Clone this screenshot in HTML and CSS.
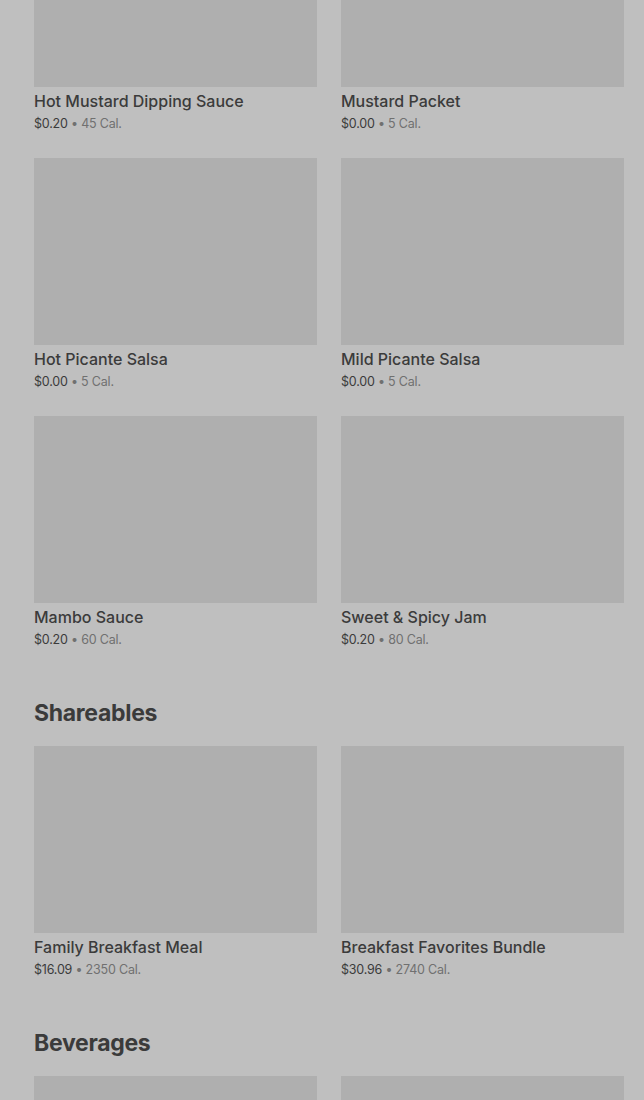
FILE: index.html
```html
<!DOCTYPE html>
<html lang="en">
<head>
    <meta charset="UTF-8">
    <meta name="viewport" content="width=device-width, initial-scale=1.0">
    <title>Menu</title>
    <link rel="stylesheet" href="styles.css">
</head>
<body>
    <div class="menu">
        <!-- Sauces (continued) -->
        <div class="items items-first">
            <div class="item">
                <div class="item-img"></div>
                <div class="item-name">Hot Mustard Dipping Sauce</div>
                <div class="item-meta"><span class="price">$0.20</span> • 45 Cal.</div>
            </div>
            <div class="item">
                <div class="item-img"></div>
                <div class="item-name">Mustard Packet</div>
                <div class="item-meta"><span class="price">$0.00</span> • 5 Cal.</div>
            </div>
            <div class="item">
                <div class="item-img"></div>
                <div class="item-name">Hot Picante Salsa</div>
                <div class="item-meta"><span class="price">$0.00</span> • 5 Cal.</div>
            </div>
            <div class="item">
                <div class="item-img"></div>
                <div class="item-name">Mild Picante Salsa</div>
                <div class="item-meta"><span class="price">$0.00</span> • 5 Cal.</div>
            </div>
            <div class="item">
                <div class="item-img"></div>
                <div class="item-name">Mambo Sauce</div>
                <div class="item-meta"><span class="price">$0.20</span> • 60 Cal.</div>
            </div>
            <div class="item">
                <div class="item-img"></div>
                <div class="item-name">Sweet &amp; Spicy Jam</div>
                <div class="item-meta"><span class="price">$0.20</span> • 80 Cal.</div>
            </div>
        </div>

        <h2 class="section-title">Shareables</h2>
        <div class="items">
            <div class="item">
                <div class="item-img"></div>
                <div class="item-name">Family Breakfast Meal</div>
                <div class="item-meta"><span class="price">$16.09</span> • 2350 Cal.</div>
            </div>
            <div class="item">
                <div class="item-img"></div>
                <div class="item-name">Breakfast Favorites Bundle</div>
                <div class="item-meta"><span class="price">$30.96</span> • 2740 Cal.</div>
            </div>
        </div>

        <h2 class="section-title">Beverages</h2>
        <div class="items">
            <div class="item">
                <div class="item-img"></div>
            </div>
            <div class="item">
                <div class="item-img"></div>
            </div>
        </div>
    </div>
</body>
</html>
```

FILE: styles.css
```css
body {
  margin: 0;
  background-color: #bfbfbf;
  font-family: Inter, "Noto Sans", Arial, sans-serif;
  color: #3b3b3b;
  overflow: hidden;
}

.menu {
  padding: 0 20px 0 34px;
}

.items {
  display: grid;
  grid-template-columns: 1fr 1fr;
  column-gap: 24px;
  row-gap: 24px;
}

.items-first {
  margin-top: -100px;
}

.item-img {
  height: 187px;
  background-color: #afafaf;
}

.item-name {
  margin-top: 4px;
  font-size: 16px;
  line-height: 20px;
  font-weight: 500;
  color: #3b3b3b;
}

.item-meta {
  margin-top: 3px;
  font-size: 12.5px;
  line-height: 20px;
  letter-spacing: -0.2px;
  color: #707070;
}

.item-meta .price {
  color: #3b3b3b;
}

/* Section headings */
.section-title {
  margin: 47px 0 17px;
  font-size: 23px;
  line-height: 32px;
  font-weight: 700;
  letter-spacing: -0.3px;
  color: #3b3b3b;
}
```
